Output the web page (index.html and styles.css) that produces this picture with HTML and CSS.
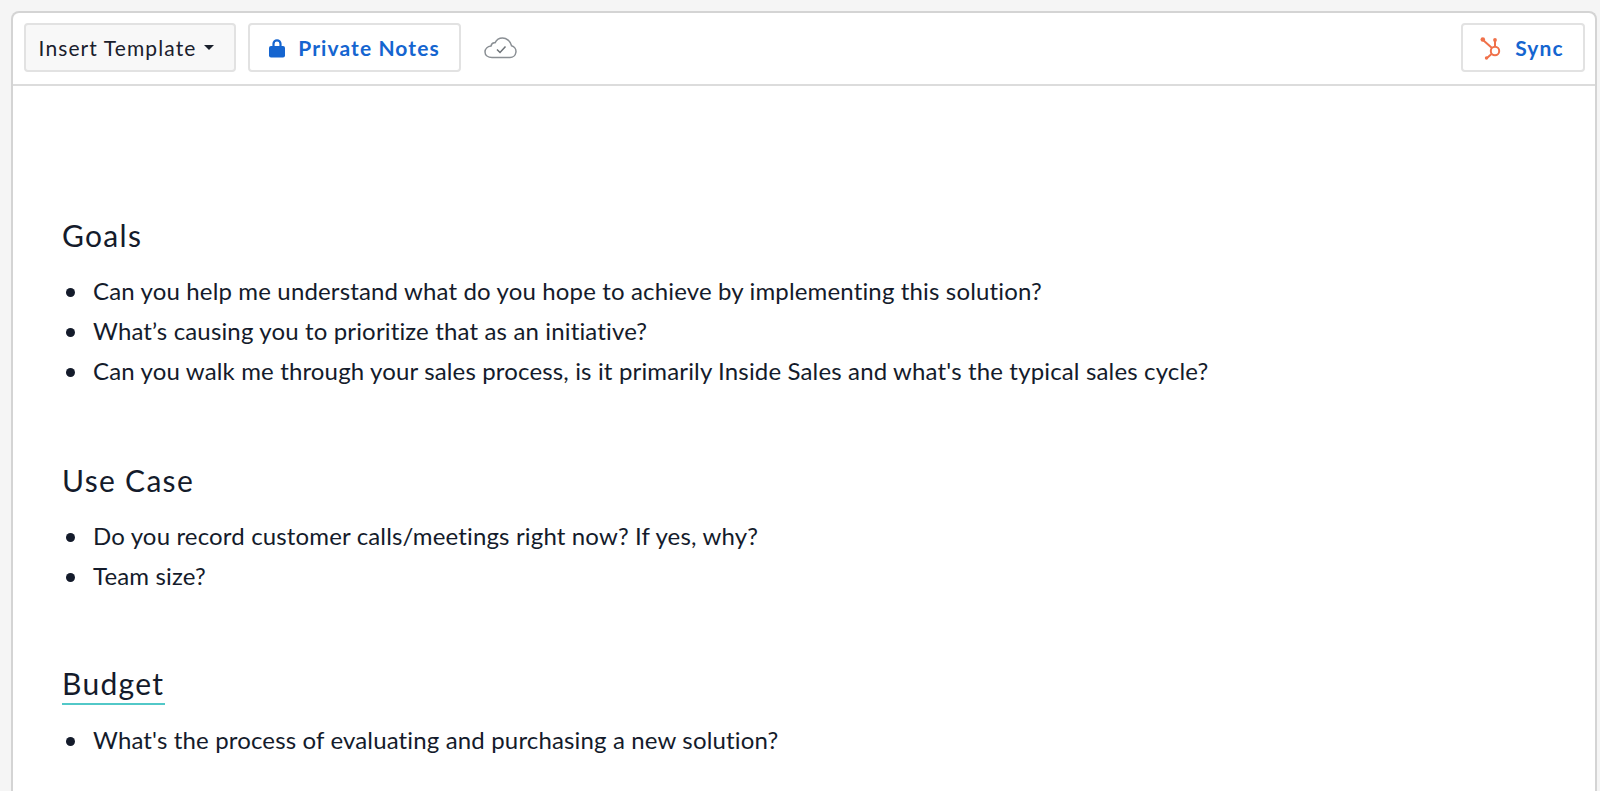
FILE: index.html
```html
<!DOCTYPE html>
<html>

<head>
  <title>Notes</title>
  <meta charset="utf-8">
  <link rel="stylesheet" href="styles.css">
</head>

<body>
  <div class="card">
    <div class="toolbar">
      <button class="btn btn-template">Insert Template<span class="caret"></span></button>
      <button class="btn btn-blue">
        <svg class="lock" width="16" height="20" viewBox="0 0 16 20">
          <path d="M4.5 8.5V5.8a3.5 3.5 0 0 1 7 0v2.7" fill="none" stroke="#1565d0" stroke-width="2.2"/>
          <rect x="0" y="8" width="16" height="11.5" rx="2" fill="#1565d0"/>
        </svg>
        Private Notes
      </button>
      <svg class="cloud" width="34" height="22" viewBox="0 0 34 22">
        <path d="M8 20.5h18a6 6 0 0 0 1.5-11.8C26.5 4 22.5 1 18.500 1c-3.500 0-6 1.800-7.500 4.800C9 5.500 7.500 6.500 7 9 3.500 9.500 1 12 1 15c0 3.300 3 5.500 7 5.500z" fill="none" stroke="#8a8f94" stroke-width="1.500"/>
        <path d="M13 12.500l3 3 5.500-6" fill="none" stroke="#6d7277" stroke-width="1.500"/>
      </svg>
      <button class="btn btn-blue btn-sync">
        <svg class="hub" width="22" height="24" viewBox="0 0 22 24">
          <g fill="none" stroke="#f0714a" stroke-width="2">
            <circle cx="15" cy="15" r="4.200"/>
            <path d="M3 4l9 8M15 4v7M11.500 18l-4.500 4"/>
          </g>
          <g fill="#f0714a">
            <circle cx="2.800" cy="3.500" r="2.300"/>
            <circle cx="15" cy="4" r="1.900"/>
            <circle cx="6.500" cy="22" r="1.700"/>
          </g>
        </svg>
        Sync
      </button>
    </div>
    <div class="editor">
      <h2>Goals</h2>
      <ul>
        <li>Can you help me understand what do you hope to achieve by implementing this solution?</li>
        <li>What’s causing you to prioritize that as an initiative?</li>
        <li>Can you walk me through your sales process, is it primarily Inside Sales and what's the typical sales cycle?</li>
      </ul>
      <h2>Use Case</h2>
      <ul>
        <li>Do you record customer calls/meetings right now? If yes, why?</li>
        <li>Team size?</li>
      </ul>
      <h2 class="budget"><span class="mark">Budget</span></h2>
      <ul>
        <li>What's the process of evaluating and purchasing a new solution?</li>
      </ul>
    </div>
  </div>
</body>

</html>
```

FILE: styles.css
```css
* {
  margin: 0;
  padding: 0;
  box-sizing: border-box;
}

html, body {
  height: 100%;
  overflow: hidden;
}

body {
  background: #f5f5f5;
  padding: 11px 3px 0 11px;
  font-family: Lato, "Liberation Sans", sans-serif;
  color: #141b2b;
}

.card {
  height: 100%;
  background: #fff;
  border: 2px solid #d4d4d4;
  border-bottom: 0;
  border-radius: 8px 8px 0 0;
  overflow: hidden;
}

.toolbar {
  display: flex;
  align-items: center;
  gap: 12px;
  height: 73px;
  padding: 0 10px 2px 11px;
  border-bottom: 2px solid #dcdcdc;
}

.btn {
  display: flex;
  align-items: center;
  justify-content: center;
  height: 49px;
  border: 2px solid #e2e2e2;
  border-radius: 4px;
  background: #fff;
  font-family: inherit;
  font-size: 21px;
  letter-spacing: 1.1px;
}

.btn-template {
  width: 212px;
  padding-right: 7px;
  background: #f8f8f8;
  color: #1a202c;
}

.caret {
  margin-left: 8px;
  border-top: 5px solid #1a202c;
  border-left: 5px solid transparent;
  border-right: 5px solid transparent;
}

.btn-blue {
  color: #1565d0;
  font-weight: 700;
}

.btn-blue svg {
  margin-right: 13px;
}

.toolbar > .btn-blue {
  width: 213px;
}

.cloud {
  margin-left: 11px;
}

.toolbar > .btn-sync {
  width: 124px;
  padding-right: 2px;
  margin-left: auto;
}

.editor {
  padding: 0 49px;
}

h2 {
  font-size: 30px;
  font-weight: 400;
  line-height: 40px;
  letter-spacing: 1.3px;
  margin-top: 69px;
  margin-bottom: 16px;
}

h2:first-child {
  margin-top: 129px;
}

h2.budget {
  margin-top: 67px;
  margin-bottom: 15px;
}

.mark {
  display: inline-block;
  padding-right: 1px;
  border-bottom: 2px solid #52c8c8;
}

ul {
  list-style: none;
}

li {
  position: relative;
  padding-left: 31px;
  font-size: 24px;
  line-height: 40px;
  letter-spacing: .15px;
}

li::before {
  content: "";
  position: absolute;
  left: 4px;
  top: 17px;
  width: 9px;
  height: 9px;
  border-radius: 50%;
  background: #141b2b;
}
```
